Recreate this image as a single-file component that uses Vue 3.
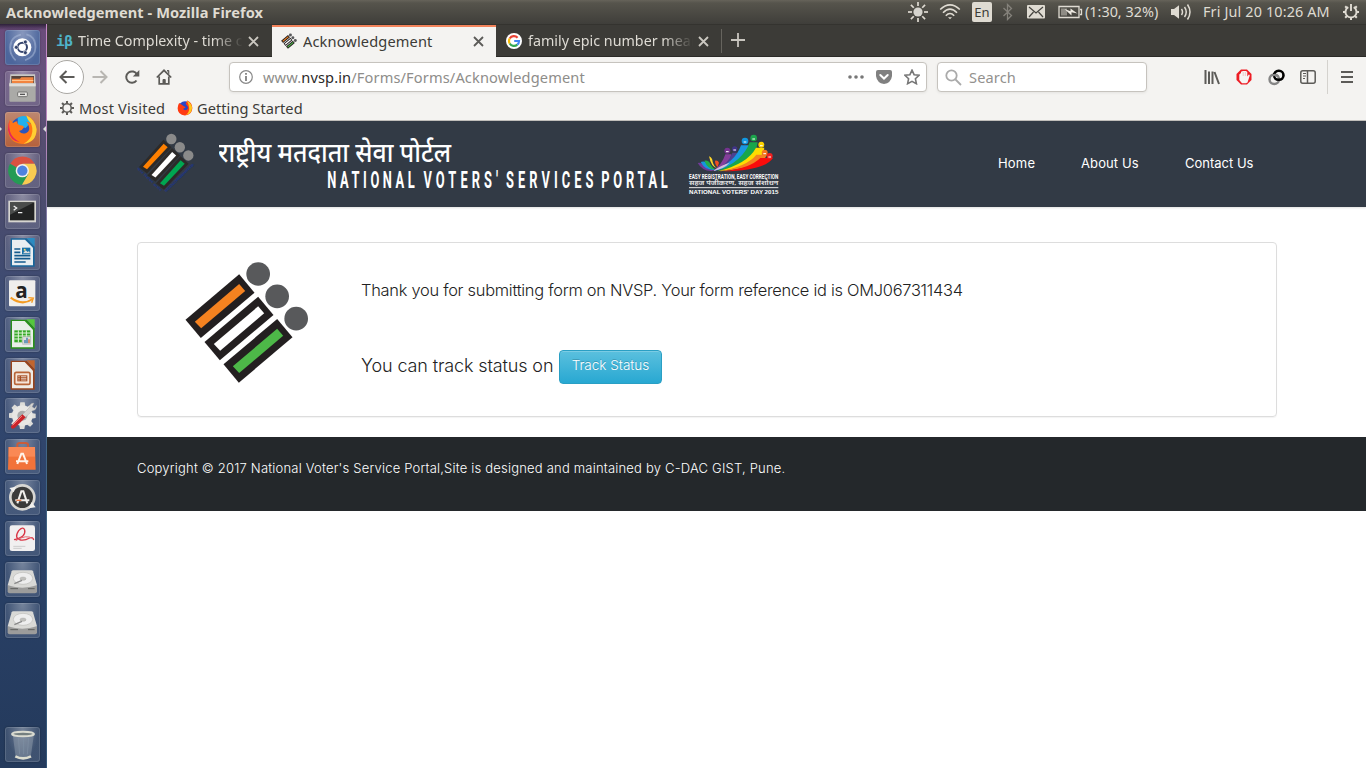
<script setup>
const bars = [0, 1, 2]
const fills = ['#f58220', '#ffffff', '#4db848']
const smallFills = ['#ff8000', '#ffffff', '#00a651']
const words = [
  { t: 'NATIONAL', x: 108.3, w: 87.5 },
  { t: "VOTERS'", x: 204.5, w: 74.5 },
  { t: 'SERVICES', x: 287, w: 87.5 },
  { t: 'PORTAL', x: 382.3, w: 66.5 }
]
const links = [
  { t: 'Home', c: 'home' },
  { t: 'About Us', c: 'about' },
  { t: 'Contact Us', c: 'contact' }
]
const rays = [0, 45, 90, 135, 180, 225, 270, 315]
</script>

<template>
  <div class="desktop">
    <header class="panel">
      <div class="title">Acknowledgement - Mozilla Firefox</div>
      <div class="tray">
        <svg class="mid" width="22" height="22" viewBox="0 0 22 22">
          <circle cx="11" cy="11" r="4.6" fill="#d5d3cd" />
          <path v-for="r in rays" :key="r" d="M11 1v4" stroke="#dfdbd2" stroke-width="1.7" :transform="`rotate(${r} 11 11)`" />
        </svg>
        <svg class="mid" width="22" height="18" viewBox="0 0 22 18" fill="none" stroke="#dfdbd2" stroke-width="1.6">
          <path d="M1.2 6.5Q11-2.7 20.8 6.500M4 9.700Q11 2.700 18 9.700M6.800 12.700Q11 8.300 15.200 12.700" />
          <path d="M9 14.300h4l-2 2z" fill="#dfdbd2" stroke="none" />
        </svg>
        <span class="lang">En</span>
        <svg class="mid" width="12" height="18" viewBox="0 0 12 18" fill="none" stroke="#85827b" stroke-width="1.300">
          <path d="M1.500 5l8 7.500-4 4V1.500l4 4-8 7.500" />
        </svg>
        <svg class="mid" width="18" height="14" viewBox="0 0 18 14">
          <rect width="18" height="13.500" rx="1" fill="#dfdbd2" />
          <path d="M2 2l7 6 7-6M2 12l4.500-5M16 12l-4.500-5" fill="none" stroke="#45443f" stroke-width="1.200" />
        </svg>
        <svg class="batt" width="25" height="14" viewBox="0 0 25 14">
          <path d="M1 1.500h20v11H1zM22 4.500h1.500v5H22" fill="none" stroke="#dfdbd2" stroke-width="1.300" />
          <path d="M3 3.500h6v7H3z" fill="#8f8c85" />
          <path d="M6.500 4l6 2.300V3.500l7 5-6-1.200v3.200z" fill="#eeeae2" />
        </svg>
        <span class="tt battxt">(1:30, 32%)</span>
        <svg class="vol" width="21" height="18" viewBox="0 0 21 18" fill="none" stroke="#dfdbd2" stroke-width="1.500">
          <path d="M0 6h3l5-3.800v13.600L3 12H0z" fill="#dfdbd2" stroke="none" />
          <path d="M10.500 6q2 3 0 6M13.500 4q3.500 5 0 10M16.500 1.500q5 7.500 0 15" />
        </svg>
        <span class="tt date">Fri Jul 20 10:26 AM</span>
        <svg class="mid" width="18" height="18" viewBox="0 0 18 18" fill="none" stroke="#dfdbd2">
          <path d="M6.300 4.200A5.500 5.500 0 1 0 11.700 4.200" stroke-width="1.900" />
          <path d="M9 1v7" stroke-width="1.900" />
          <path d="M14 9h3M1 9h3M9 14v3M12.800 12.800l2 2M5.200 12.800l-2 2M12.800 5.200l2-2M5.200 5.200l-2-2" stroke-width="2" />
        </svg>
      </div>
    </header>

    <div class="workspace">
      <aside class="launcher">
        <div class="tile dash">
          <svg viewBox="0 0 105 105">
            <g fill="none" stroke="#a9b9d8" stroke-width="5" opacity=".55">
              <path d="M18 72Q6 24 48 14M88 30Q102 76 60 91M32 91Q8 68 20 36M64 13Q96 20 90 62" />
            </g>
            <circle cx="52" cy="52" r="27" fill="#fff" />
            <circle cx="52" cy="52" r="14" fill="none" stroke="#34436c" stroke-width="6" />
            <g fill="#34436c" stroke="#fff" stroke-width="2"><circle cx="34" cy="52" r="6" /><circle cx="61" cy="36" r="6" /><circle cx="61" cy="68" r="6" /></g>
          </svg>
        </div>
        <div class="tile">
          <svg viewBox="0 0 105 105">
            <path d="M16 10h74l2 34H13z" fill="#c9c8c4" /><path d="M19 15h68v24H19z" fill="#57443c" />
            <path d="M21 23h24l4-4h36v20H21z" fill="#f1843f" /><path d="M21 27h64v3H21z" fill="#ffc48d" />
            <path d="M13 37h79v52q0 3-3 3H16q-3 0-3-3z" fill="#aaaaa7" /><path d="M13 37h79v9H13z" fill="#deddd9" />
            <rect x="38" y="63" width="29" height="14" rx="3" fill="#e9e8e5" stroke="#70706e" stroke-width="3" /><path d="M45 70h15" stroke="#555" stroke-width="4" />
          </svg>
        </div>
        <div class="tile fox">
          <svg viewBox="0 0 105 105">
            <circle cx="53" cy="53" r="38" fill="#2b56bc" /><path d="M38 17q24-13 43 10L62 48 39 42z" fill="#22b0ec" />
            <path d="M14 23q7 4 10 10 6-5 13-5-1 9 8 12 11 0 12 6-4 9-15 11 9 12 23 5 10-6 7-18-2-9-8-15 9 0 13 6-2-14-13-25 28 10 30 43-2 41-42 43-39-2-43-41 0-18 5-32z" fill="#ff7616" />
            <path d="M64 10q26 13 31 42-1 40-40 43 24-12 27-36 2-21-12-34-4-6-6-15z" fill="#ffcf32" />
            <path d="M14 24q-8 48 30 66-29-3-35-36 0-19 5-30z" fill="#e72659" />
          </svg>
          <i class="arrow left"></i><i class="arrow right"></i>
        </div>
        <div class="tile">
          <svg viewBox="0 0 105 105">
            <path d="M52 53L16 32A42 42 0 0 1 89 32H52z" fill="#da5140" />
            <path d="M52 53L15 32A42 42 0 0 0 51 95L71 64z" fill="#259b54" />
            <path d="M52 32h37A42 42 0 0 1 51 95l19-32z" fill="#f8cb51" />
            <circle cx="52" cy="53" r="20" fill="#f2f1ec" /><circle cx="52" cy="53" r="15.500" fill="#4e83df" />
          </svg>
        </div>
        <div class="tile">
          <svg viewBox="0 0 105 105">
            <path d="M10 20h83v65H10z" fill="#d6d5d0" /><path d="M15 25h73v54H15z" fill="#222323" /><path d="M15 25h73L15 62z" fill="#4a4c4b" />
            <path d="M26 36l9 6-9 7M39 56h13" fill="none" stroke="#eee" stroke-width="4" />
          </svg>
        </div>
        <div class="tile">
          <svg viewBox="0 0 105 105">
            <path d="M17 10h48l24 25v60H17z" fill="#18669b" /><path d="M21 14h39l24 24v53H21z" fill="#e9eef1" /><path d="M65 9h24v26z" fill="#2b8bc1" />
            <path d="M28 42h18M28 52h18M28 62h48M28 71h48M28 81h34" stroke="#155b8d" stroke-width="5" /><path d="M51 38h25v20H51z" fill="#1972a8" /><path d="M54 55l8-9 6 5 4-3 3 7z" fill="#ddd" /><circle cx="59" cy="44" r="3" fill="#f9d867" />
          </svg>
        </div>
        <div class="tile">
          <svg viewBox="0 0 105 105">
            <rect x="12" y="13" width="79" height="78" rx="3" fill="#efeeec" />
            <text x="31" y="65" class="amazon-a">a</text>
            <path d="M17 65q35 26 66 4" fill="none" stroke="#f49b22" stroke-width="6" /><path d="M70 65l15 1-5 14" fill="none" stroke="#f49b22" stroke-width="4" />
          </svg>
        </div>
        <div class="tile">
          <svg viewBox="0 0 105 105">
            <path d="M17 8h48l24 25v62H17z" fill="#298f1b" /><path d="M21 12h38l25 26v53H21z" fill="#e9eee9" /><path d="M65 7h24v27z" fill="#55c83d" />
            <path d="M28 40h48v36H28z" fill="#35a726" /><path d="M28 48h48M28 57h48M28 66h48M40 40v36M52 40v36M64 40v36" stroke="#e4f6dd" stroke-width="3" />
            <path d="M53 59h24v23H53z" fill="#ddd" stroke="#888" /><path d="M58 79V69h4v10M64 79V62h4v17" fill="#3678a9" /><path d="M70 67h4v12h-4z" fill="#d66735" />
          </svg>
        </div>
        <div class="tile">
          <svg viewBox="0 0 105 105">
            <path d="M17 8h48l24 25v62H17z" fill="#97431c" /><path d="M21 12h38l25 26v53H21z" fill="#eeebe6" /><path d="M65 7h24v27z" fill="#c2652e" />
            <rect x="29" y="43" width="46" height="36" rx="5" fill="#f5e4d8" stroke="#b96538" stroke-width="5" /><path d="M37 52h30v18H37z" fill="#a54b20" /><path d="M40 56h4M40 61h4M40 66h4M48 56h16M48 61h16M48 66h16" stroke="#fff" stroke-width="2" />
          </svg>
        </div>
        <div class="tile">
          <svg viewBox="0 0 105 105">
            <path v-for="r in rays" :key="'g' + r" d="M43 30l3-17h13l3 17z" fill="#deddd9" :transform="`rotate(${r} 52 53)`" />
            <circle cx="52" cy="53" r="31" fill="#e8e7e4" /><circle cx="52" cy="53" r="15" fill="#aaa" />
            <path d="M50 52L75 27q-2-12 12-12l-6 12 8 4 6-9q1 15-14 17L58 61z" fill="#d5d4d2" stroke="#999" /><path d="M18 84l34-35 10 9-33 32q-12 6-11-6z" fill="#ca2329" /><path d="M23 82l28-28" stroke="#fc7772" stroke-width="3" />
          </svg>
        </div>
        <div class="tile">
          <svg viewBox="0 0 105 105">
            <path d="M37 25V17q0-5 8-5h16q8 0 8 5v8" fill="none" stroke="#c95c3a" stroke-width="6" /><path d="M11 24h79l2 68H9z" fill="#f2733a" /><path d="M11 24h79v29H11z" fill="#fa8955" />
            <path d="M37 75l12-31h5l12 31M33 67h37" fill="none" stroke="#fff3e9" stroke-width="6" />
          </svg>
        </div>
        <div class="tile">
          <svg viewBox="0 0 105 105">
            <circle cx="52" cy="52" r="36" fill="#3b3b3a" stroke="#d8d7d3" stroke-width="8" />
            <path d="M37 70l12-36h6l12 36M31 61h42" fill="none" stroke="#f1f0ed" stroke-width="6" /><path d="M34 61h15" stroke="#e77744" stroke-width="4" />
            <path d="M13 24l20-4-7 17zM92 82l-21 3 9-19z" fill="#f1f0ed" />
          </svg>
        </div>
        <div class="tile">
          <svg viewBox="0 0 105 105">
            <rect x="14" y="13" width="76" height="77" rx="7" fill="#f1f0f0" /><path d="M25 76h36M25 82h25" stroke="#ccc" stroke-width="3" />
            <path d="M27 56q37-8 32-29-5-12-18 2-15 23 6 28 13 2 27-6 10-4 12 6" fill="none" stroke="#d93645" stroke-width="4" /><path d="M32 59q31-20 53-6" fill="none" stroke="#e36670" stroke-width="3" />
          </svg>
        </div>
        <div v-for="d in 2" :key="d" class="tile">
          <svg viewBox="0 0 105 105">
            <path d="M8 70h88v18q0 6-6 6H14q-6 0-6-6z" fill="#9c9c9b" /><path d="M8 70L20 28q1-3 5-3h54q4 0 5 3l12 42q-44 14-88 0z" fill="#d9d9d6" />
            <ellipse cx="54" cy="49" rx="29" ry="18" fill="#eee" stroke="#bcbcb9" stroke-width="2" /><ellipse cx="54" cy="50" rx="9" ry="5" fill="#c0c0bd" stroke="#989896" /><path d="M28 65l23-10" stroke="#888" stroke-width="4" /><path d="M16 80h23M69 80h20" stroke="#5f605e" stroke-width="3" />
          </svg>
        </div>
        <div class="tile trash">
          <svg viewBox="0 0 105 105">
            <path d="M23 22l9 68q22 9 45 0l10-68z" fill="#a9b4bd" opacity=".38" /><path d="M40 32l4 50M56 34v48M71 32l-4 50" stroke="#7f8fa3" stroke-width="2" />
            <path d="M31 88q23 12 47 0" fill="none" stroke="#dbdcce" stroke-width="8" /><ellipse cx="54" cy="21" rx="33" ry="7" fill="#747f80" stroke="#dadbd1" stroke-width="6" />
          </svg>
        </div>
      </aside>

      <section class="browser">
        <div class="tabs">
          <div class="tab first">
            <span class="ib">iβ</span>
            <span class="label fade t1">Time Complexity - time complexity</span>
            <svg class="close" width="11" height="11" viewBox="0 0 11 11"><path d="M1 1l9 9M10 1l-9 9" /></svg>
          </div>
          <div class="tab active">
            <svg class="fav" width="16" height="16" viewBox="165 75 375 370">
              <g v-for="b in bars" :key="b" :transform="`translate(${b * 57} ${b * 67})`">
                <path d="M168 254L329 118 375 173 214 309z" fill="#231f20" /><path d="M196 260L329 147 347 168 215 280z" :fill="fills[b]" /><circle cx="386" cy="117" r="35" fill="#58595b" />
              </g>
            </svg>
            <span class="label t2">Acknowledgement</span>
            <svg class="close" width="11" height="11" viewBox="0 0 11 11"><path d="M1 1l9 9M10 1l-9 9" /></svg>
          </div>
          <div class="tab third">
            <svg class="fav" width="16" height="16" viewBox="0 0 16 16">
              <circle cx="8" cy="8" r="8" fill="#fff" /><g fill="none" stroke-width="2.200">
                <path d="M11.600 4.700A5 5 0 0 0 3.700 5.500" stroke="#ea4335" /><path d="M3.700 5.500a5 5 0 0 0 0 5" stroke="#fbbc05" /><path d="M3.700 10.500a5 5 0 0 0 7.600 1.200" stroke="#34a853" /><path d="M8.200 8H13q0 2.500-1.700 3.700" stroke="#4285f4" />
              </g>
            </svg>
            <span class="label fade t3">family epic number meaning</span>
            <svg class="close" width="11" height="11" viewBox="0 0 11 11"><path d="M1 1l9 9M10 1l-9 9" /></svg>
          </div>
          <svg class="plus" width="14" height="14" viewBox="0 0 14 14"><path d="M7 0v14M0 7h14" stroke="#c9c6bf" stroke-width="1.800" /></svg>
        </div>

        <div class="toolbar">
          <div class="back"><svg width="16" height="16" viewBox="0 0 16 16"><path d="M15.500 8H1.500M7.500 2L1.500 8l6 6" /></svg></div>
          <div class="tool pale"><svg width="16" height="16" viewBox="0 0 16 16"><path d="M.5 8h14M8.500 2l6 6-6 6" /></svg></div>
          <div class="tool"><svg width="16" height="16" viewBox="0 0 16 16"><path d="M12.500 11.500A5.700 5.700 0 1 1 13 5.500" /><path d="M15.300 1v6.500H8.800z" fill="#5c5b58" stroke="none" /></svg></div>
          <div class="tool home-btn"><svg width="16" height="16" viewBox="0 0 16 16"><path d="M.8 8.500L8 1.300l7.200 7.200M3.200 7.500v7.300h9.600V7.500" /><path d="M11 1.500h1.800v3.500M7 14.500v-4h2.200v4z" fill="#5c5b58" stroke-width="1" /></svg></div>
          <div class="url">
            <svg width="14" height="14" viewBox="0 0 14 14"><circle cx="7" cy="7" r="6.300" fill="none" stroke="#888" stroke-width="1.200" /><path d="M7 6v5M7 3v1.700" stroke="#777" stroke-width="1.700" /></svg>
            <span class="address">www.<b>nvsp.in</b>/Forms/Forms/Acknowledgement</span>
            <div class="actions">
              <svg width="16" height="16" viewBox="0 0 16 16" fill="#777"><circle cx="2" cy="8" r="1.800" /><circle cx="8" cy="8" r="1.800" /><circle cx="14" cy="8" r="1.800" /></svg>
              <svg width="16" height="16" viewBox="0 0 16 16"><path d="M2 1h12q2 0 2 2v4q-1 7-8 8-7-1-8-8V3q0-2 2-2z" fill="#808080" /><path d="M4.300 6L8 9.500 11.700 6" fill="none" stroke="#fff" stroke-width="2" stroke-linecap="round" /></svg>
              <svg width="16" height="16" viewBox="0 0 16 16"><path d="M8 1.200l2.100 4.500 4.900.6-3.600 3.400 1 5L8 12.300l-4.400 2.400 1-5L1 6.300l4.900-.6z" fill="none" stroke="#777" stroke-width="1.600" /></svg>
            </div>
          </div>
          <div class="search">
            <svg width="17" height="17" viewBox="0 0 17 17" fill="none" stroke="#aaa" stroke-width="1.800"><circle cx="6.500" cy="6.500" r="5.200" /><path d="M10.500 10.500l5.500 5.500" /></svg>
            <span>Search</span>
          </div>
          <div class="extras">
            <div class="tool"><svg width="16" height="16" viewBox="0 0 16 16"><path d="M1.500 1v14M5 2.500V15M8.500 2.500V15M10.500 3l4.500 12" /></svg></div>
            <div class="tool"><svg width="16" height="16" viewBox="0 0 16 16"><path d="M5 .5h6L15.500 5v6L11 15.500H5L.5 11V5z" fill="#ed1c24" stroke="none" /><path d="M3.300 5.500L5 4V2.800L7 1.900h3L11.300 3v4.500L13 5.300l.8 1.200L11.500 13.500 10 14.300H6L3.300 11z" fill="#f6f4f3" stroke="none" /><path d="M7.200 3v4M9.300 3v4" stroke="#e7a9aa" stroke-width=".6" /></svg></div>
            <div class="tool"><svg width="17" height="17" viewBox="0 0 17 17"><rect x="1.500" y="5.500" width="9.500" height="9.500" rx="4.700" stroke="#858585" stroke-width="2.400" /><rect x="6" y="1.800" width="9.500" height="9" rx="4.500" stroke="#000" stroke-width="2.600" /><path d="M4.500 6.700q3-2.200 6 1" stroke="#858585" stroke-width="2.200" /></svg></div>
            <div class="tool"><svg width="16" height="16" viewBox="0 0 16 16"><rect x=".8" y="1.800" width="14.400" height="12.400" rx="2" stroke-width="1.500" /><path d="M7.500 2v12" stroke-width="1.500" /><path d="M3 4.500h3M3 7h3M3 9.500h2" stroke-width="1" /></svg></div>
            <i class="divider"></i>
            <div class="tool menu"><svg width="12" height="14" viewBox="0 0 12 14"><path d="M0 2h12M0 7h12M0 12h12" stroke-width="1.800" /></svg></div>
          </div>
        </div>

        <div class="bookmarks">
          <svg width="14" height="14" viewBox="0 0 14 14" fill="none" stroke="#5c5b58"><circle cx="7" cy="7" r="4.200" stroke-width="1.500" /><path v-for="r in rays" :key="'b' + r" d="M7 0v2.800" stroke-width="2" :transform="`rotate(${r} 7 7)`" /></svg>
          <span class="mv">Most Visited</span>
          <svg width="16" height="16" viewBox="0 0 105 105">
            <circle cx="53" cy="53" r="44" fill="#2b46c6" /><path d="M14 20q10 8 28 19l15 8-17 12q10 12 25 5 10-7 6-20L57 24l10-20q32 12 34 49-3 47-49 48Q5 98 4 54q1-20 10-34z" fill="#ff3b13" /><path d="M64 5q31 12 35 48-3 41-43 46 26-16 24-46-2-26-16-48z" fill="#ffc71e" />
          </svg>
          <span class="gs">Getting Started</span>
        </div>

        <main class="page">
          <div class="masthead">
            <svg class="emblem" width="60" height="62" viewBox="50 36 180 186">
              <g v-for="b in bars" :key="b" :transform="`translate(${b * 25.500} ${b * 24.700})`">
                <path d="M72 140L133 72 144 82 82 148z" fill="none" stroke="#2c2a29" stroke-width="18" />
                <path d="M71 140L133 71 145 82 83 148z" :fill="smallFills[b]" /><circle cx="156" cy="57" r="15.500" fill="#8a8a8a" />
              </g>
              <text transform="translate(52 146) rotate(44)" class="rim" textLength="98">भारत निर्वाचन आयोग</text>
              <text transform="translate(140 217) rotate(-44)" class="rim" textLength="118">ELECTION COMMISSION OF INDIA</text>
            </svg>
            <svg class="brand" width="452" height="70" viewBox="0 0 452 70">
              <text x="-1" y="34" class="hindi" textLength="233" lengthAdjust="spacingAndGlyphs">राष्ट्रीय मतदाता सेवा पोर्टल</text>
              <g transform="scale(.53 1)"><text v-for="w in words" :key="w.t" class="english" :x="w.x / .53" y="60.500" :textLength="w.w / .53">{{ w.t }}</text></g>
            </svg>
            <svg class="voters-day" width="94" height="64" viewBox="680 35 282 192">
              <path d="M712 128q13-3 22 9 10 12 28 14-34 5-50-23z" fill="#703a98" /><path d="M721 125q15-5 24 10 8 10 20 14-30 3-44-24z" fill="#1596dc" /><path d="M732 121q13-3 19 12 6 10 15 14-24 1-34-26z" fill="#24ac49" /><path d="M746 108q10 3 11 17 4 14 14 19-18-2-25-36z" fill="#ffd72a" /><path d="M764 121q9-2 12 6l-4 13q-8-6-8-19z" fill="#f04d23" />
              <path d="M795 102h18q-5 34-56 50 28-18 38-50z" fill="#843e9b" /><path d="M816 97h16q2 39-73 55 46-20 57-55z" fill="#4b4191" />
              <path d="M842 75h23q-7 59-105 77 66-28 82-77z" fill="#1997e1" /><path d="M868 66h24q-5 65-124 87 80-29 100-87z" fill="#18a64b" /><path d="M887 82h25q-2 54-140 71 90-23 115-71z" fill="#ffdc00" /><path d="M888 103h32q-16 41-143 50 84-15 111-50z" fill="#f58220" /><path d="M900 113h38q-24 37-148 40 79-9 110-40z" fill="#fa0c0c" />
              <path d="M757 152q30-20 51-25-17 19-51 25z" fill="#d6c0da" />
              <circle cx="801" cy="91" r="9" fill="#75338f" /><circle cx="823" cy="86" r="8" fill="#403486" /><circle cx="854" cy="62" r="10" fill="#1198e3" /><circle cx="880" cy="53" r="10" fill="#1ca44c" /><circle cx="903" cy="73" r="9" fill="#ffd400" /><circle cx="913" cy="97" r="9" fill="#f5751f" /><circle cx="928" cy="107" r="9" fill="#f02020" />
              <path d="M797 94h8M819 89h8M850 65h8M876 56h8M899 76h8M909 100h8M924 110h8" stroke="#fff" stroke-width="3" />
              <text x="686" y="177" class="vd1" textLength="268" lengthAdjust="spacingAndGlyphs">EASY REGISTRATION, EASY CORRECTION</text>
              <text x="686" y="195" class="vd2" textLength="268" lengthAdjust="spacingAndGlyphs">सहज पंजीकरण, सहज संशोधन</text>
              <path d="M686 202h268" stroke="#e8e8e8" stroke-width="3" />
              <text x="686" y="220" class="vd3" textLength="268" lengthAdjust="spacingAndGlyphs">NATIONAL VOTERS' DAY 2015</text>
            </svg>
            <nav><a v-for="l in links" :key="l.t" :class="l.c">{{ l.t }}</a></nav>
          </div>

          <div class="content">
            <div class="card">
              <svg class="logo" width="125" height="123" viewBox="166.500 78 375 369">
                <g v-for="b in bars" :key="b" :transform="`translate(${b * 57} ${b * 67})`">
                  <path d="M168 254L329 118 375 173 214 309z" fill="#231f20" /><path d="M196 260L329 147 347 168 215 280z" :fill="fills[b]" /><circle cx="386" cy="117" r="35.500" fill="#58595b" />
                </g>
              </svg>
              <div class="message">
                <p class="thanks">Thank you for submitting form on NVSP. Your form reference id is OMJ067311434</p>
                <div class="track"><span>You can track status on</span><button>Track Status</button></div>
              </div>
            </div>
          </div>
          <footer>Copyright © 2017 National Voter's Service Portal,Site is designed and maintained by C-DAC GIST, Pune.</footer>
        </main>
      </section>
    </div>
  </div>
</template>

<style>
body { margin: 0; overflow: hidden; background: #fff; }
</style>

<style scoped>
* { box-sizing: border-box; }
svg { display: block; flex: none; }
.desktop { width: 1366px; height: 768px; display: flex; flex-direction: column; font: 14.600px "Noto Sans", sans-serif; letter-spacing: .13px; color: #3c3b37; background: #fff; white-space: nowrap; overflow: hidden; }
.panel { height: 24px; flex: none; display: flex; justify-content: space-between; background: linear-gradient(#66635a 0, #56544c 3px, #3f3e3a 24px); color: #dfdbd2; line-height: 24px; }
.title { padding-left: 6px; font-weight: 700; font-size: 14.600px; letter-spacing: .08px; }
.tray { width: 464px; display: grid; grid-template-columns: 32px 32px 32px 19px 37px 31px 85px 33px 134px 27px; align-items: center; }
.mid { justify-self: center; }
.lang { justify-self: center; width: 20px; height: 20px; border-radius: 2px; background: #dfdbd2; color: #3c3b37; font-size: 13px; line-height: 20px; text-align: center; }
.batt { margin-left: 4px; }
.vol { margin-left: 1px; }
.tt { font-size: 14.400px; }
.date { letter-spacing: .14px; }
.battxt { letter-spacing: 0; }
.workspace { flex: 1; display: flex; min-height: 0; }
.launcher { position: relative; width: 47px; flex: none; display: flex; flex-direction: column; align-items: center; gap: 5.940px; padding: 6px 0; border-right: 1px solid; border-image: linear-gradient(#c88ac9 0, #b487bb 120px, #66759a 230px, #486b8a 330px, #35577a) 1; background: linear-gradient(rgba(20,15,30,.7), transparent 6px), linear-gradient(#6b4b7b 0, #64527c 60px, #554d70 120px, #4a4c6e 190px, #3c4b72 270px, #31466d 400px, #294066 540px, #243a5c 744px); }
.tile { position: relative; width: 35px; height: 35px; flex: none; margin-right: 1px; border-radius: 3px; background: radial-gradient(ellipse at 50% 0, rgba(255,255,255,.36), rgba(255,255,255,.12) 65%); box-shadow: inset 0 0 0 1px rgba(255,255,255,.13), 0 0 2px rgba(0,0,0,.35); }
.tile svg { width: 35px; height: 35px; }
.dash { background: radial-gradient(ellipse at 50% 10%, #8797bd, #4c669c 75%); }
.fox { background: linear-gradient(#bd8770, #b5613c); }
.trash { margin-top: auto; }
.arrow { position: absolute; top: 14px; border: 3px solid transparent; }
.arrow.left { left: -6px; border-left-color: #ddd; border-right: 0; }
.arrow.right { right: -6px; border-right-color: #ddd; border-left: 0; }
.amazon-a { font: 700 62px "Open Sans", sans-serif; fill: #222; letter-spacing: 0; }
.browser { flex: 1; min-width: 0; display: flex; flex-direction: column; }
.tabs { height: 33px; flex: none; display: flex; background: #3c3b37; border-top: 1px solid #34332f; border-bottom: 1px solid #2b2a27; color: #dedbd4; }
.tab { height: 32px; display: flex; align-items: center; position: relative; }
.first { width: 225px; padding-left: 9px; }
.ib { width: 22px; font: 700 14.500px "DejaVu Sans Mono", monospace; color: #4fb3c8; letter-spacing: -.5px; }
.active { width: 224px; padding-left: 9px; background: #f4f3f1; color: #3c3b37; border-top: 2px solid #f2835b; margin-bottom: -1px; }
.active > * { position: relative; top: -1px; }
.third { width: 226px; padding-left: 10px; }
.third::after { content: ""; position: absolute; right: 0; top: 4px; width: 1px; height: 24px; background: #66645e; }
.fav { width: 16px; margin-right: 6px; }
.label { width: 165px; overflow: hidden; line-height: 30px; }
.fade { font-size: 14.300px; letter-spacing: 0; mask-image: linear-gradient(90deg, #000 135px, transparent 165px); }
.t1, .t2, .t3 { margin-right: 5px; }
.close { fill: none; stroke: #cbc8c1; stroke-width: 1.800; }
.active .close { stroke: #5c5b58; }
.plus { margin: 8px 0 0 9px; }
.toolbar { height: 40px; flex: none; display: flex; align-items: center; background: #f4f3f1; padding-left: 3px; }
.back { width: 34px; height: 34px; flex: none; border: 1px solid #aaa8a4; border-radius: 50%; background: #fff; display: grid; place-items: center; }
.back svg, .tool svg { fill: none; stroke: #5c5b58; stroke-width: 2; }
.tool { width: 32px; flex: none; display: grid; place-items: center; }
.pale svg { stroke: #b8b6b2; }
.home-btn svg { stroke-width: 1.700; }
.url { width: 698px; height: 30px; margin-left: 49px; display: flex; align-items: center; padding-left: 9px; border: 1px solid #c6c3be; border-radius: 4px; background: #fff; box-shadow: 0 1px 3px rgba(0,0,0,.07); }
.address { margin-left: 10px; color: #8e8d8a; line-height: 28px; }
.address b { font-weight: 400; color: #2b2a28; }
.actions { margin-left: auto; margin-right: 6px; display: flex; gap: 12px; }
.search { width: 210px; height: 30px; margin-left: 10px; display: flex; align-items: center; gap: 7px; padding-left: 7px; border: 1px solid #c6c3be; border-radius: 4px; background: #fff; color: #93918e; box-shadow: 0 1px 3px rgba(0,0,0,.07); }
.extras { margin-left: auto; display: flex; align-items: center; padding-right: 3px; }
.divider { width: 1px; height: 34px; margin: 0 3px; background: #d4d2ce; }
.bookmarks { height: 24px; flex: none; display: flex; align-items: center; padding: 0 0 2px 13px; background: #f4f3f1; border-bottom: 1px solid #c2c0bc; }
.mv { margin-left: 5px; width: 98px; letter-spacing: .2px; }
.gs { margin-left: 4px; letter-spacing: .05px; }
.page { flex: 1; background: #fff; font-family: Inter, "Liberation Sans", sans-serif; font-weight: 300; letter-spacing: 0; }
.masthead { height: 86px; display: flex; align-items: flex-start; background: #323a45; box-shadow: 0 1px 2px rgba(0,0,0,.13); }
.emblem { margin: 11px 0 0 88.500px; }
.rim { font: 700 10px "Noto Sans", sans-serif; fill: #1d3587; }
.brand { margin: 7px 0 0 23.500px; }
.hindi { font: 500 27.500px "Noto Sans Devanagari", "Noto Sans", sans-serif; fill: #fff; }
.english { font: 700 24.300px Roboto, sans-serif; fill: #fff; }
.voters-day { margin: 11px 0 0 16px; }
.vd1 { font: 700 19px Roboto, sans-serif; fill: #fff; }
.vd2 { font: 700 17px "Noto Sans", sans-serif; fill: #ddd; }
.vd3 { font: 700 17px "Liberation Sans", sans-serif; fill: #fff; }
nav { margin-left: auto; display: flex; color: #fff; font-size: 13px; line-height: 85px; font-weight: 400; }
.home { width: 83px; letter-spacing: .2px; } .about { width: 104px; letter-spacing: .1px; } .contact { width: 181px; }
.content { padding: 35px 89px 20px 90px; }
.card { height: 175px; display: flex; border: 1px solid #ddd; border-radius: 4px; padding: 18px 0 0 47px; box-shadow: 0 1px 1px rgba(0,0,0,.05); }
.message { margin-left: 51px; padding-top: 16px; color: #222; }
.thanks { margin: 0; font-size: 16.400px; line-height: 26px; letter-spacing: -.260px; }
.track { display: flex; align-items: center; margin-top: 47px; height: 34px; font-size: 18px; letter-spacing: -.130px; }
.track span { width: 198px; margin-top: -4px; }
button { width: 103px; height: 34px; margin: 0; padding: 0 0 4px; border: 1px solid #2a9fc4; border-radius: 4px; background: linear-gradient(#5bc0de, #28a8d2); color: #fff; font: 300 13.500px Inter, sans-serif; letter-spacing: 0; box-shadow: inset 0 1px 0 rgba(255,255,255,.2); text-shadow: 0 -1px 0 rgba(0,0,0,.2); }
footer { height: 74px; padding: 21px 0 0 90px; background: #24282b; color: #fff; font-size: 13px; line-height: 20px; letter-spacing: .200px; }
</style>
